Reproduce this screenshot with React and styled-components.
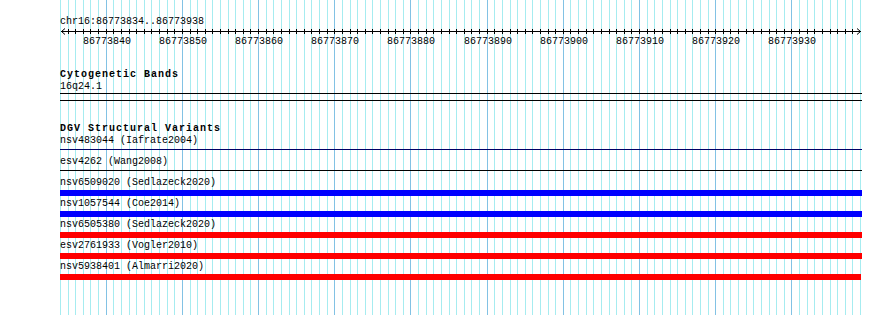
import React from 'react';
import styled, { createGlobalStyle } from 'styled-components';

const START = 86773834;
const END = 86773938;
const BASES = END - START + 1;
const VIEW_W = 800;
const PX = VIEW_W / BASES;

const GlobalStyle = createGlobalStyle`
    html, body {
        margin: 0;
        padding: 0;
        background: #fff;
    }
    body {
        font-family: "Liberation Mono", "DejaVu Sans Mono", monospace;
        font-size: 10px;
        color: #000;
    }
`;

const Page = styled.div`
    position: relative;
    width: 890px;
    height: 315px;
    overflow: hidden;
`;

const Grid = styled.svg`
    position: absolute;
    left: 60px;
    top: 0;
    width: 802px;
    height: 315px;
    pointer-events: none;
`;

const Content = styled.div`
    position: relative;
    padding: 15px 0 0 60px;
    width: 802px;
`;

// text sits 1px low in its 12px box, like the bitmap font of the original
const TextLine = styled.div`
    height: 12px;
    line-height: 14px;
    white-space: pre;
    font-size: 10px;
`;

const Heading = styled(TextLine)`
    margin-top: ${p => p.$top}px;
    font-weight: bold;
    letter-spacing: 1px;
`;

const Axis = styled.svg`
    display: block;
    width: 802px;
    height: 8px;
`;

const TickLabels = styled.div`
    position: relative;
    height: 12px;
`;

const TickLabel = styled.span`
    position: absolute;
    top: 0;
    line-height: 14px;
    transform: translateX(-50%);
`;

const Rule = styled.div`
    margin-top: ${p => p.$top}px;
    height: 1px;
    width: 802px;
    background: ${p => p.$color || '#000'};
`;

const Row = styled.div`
    height: 21px;
`;

const Bar = styled.div`
    margin-top: 2px;
    height: 6px;
    width: ${p => p.$w || 802}px;
    background: ${p => p.$color};
`;

const gridX = i => Math.round(i * PX) + 0.5;

const GridLines = () => (
    <Grid>
        {Array.from({ length: BASES + 1 }, (_, i) => {
            const major = (START + i) % 10 === 0;
            return (
                <line
                    key={i}
                    x1={gridX(i)}
                    x2={gridX(i)}
                    y1={0}
                    y2={315}
                    stroke={major ? '#82c2e4' : '#a6ecf0'}
                    strokeWidth={1}
                />
            );
        })}
    </Grid>
);

const Ruler = () => {
    const labels = [];
    for (let i = 0; i <= BASES; i++) {
        if ((START + i) % 10 === 0) labels.push(i);
    }
    return (
        <>
            <TextLine>chr16:{START}..{END}</TextLine>
            <Axis>
                <line x1={1} x2={801} y1={4.5} y2={4.5} stroke="#000" />
                {Array.from({ length: BASES - 1 }, (_, k) => k + 1).map(i => (
                    <line key={i} x1={gridX(i)} x2={gridX(i)} y1={2} y2={7} stroke="#000" />
                ))}
                <polyline points="5,1.5 1.5,4.5 5,7.5" fill="none" stroke="#000" />
                <polyline points="797,1.5 800.5,4.5 797,7.5" fill="none" stroke="#000" />
            </Axis>
            <TickLabels>
                {labels.map(i => (
                    <TickLabel key={i} style={{ left: Math.round(i * PX) + 1 }}>
                        {START + i}
                    </TickLabel>
                ))}
            </TickLabels>
        </>
    );
};

const variants = [
    { name: 'nsv483044 (Iafrate2004)', kind: 'line', color: '#000066' },
    { name: 'esv4262 (Wang2008)', kind: 'line', color: '#000' },
    { name: 'nsv6509020 (Sedlazeck2020)', kind: 'bar', color: '#0000ff' },
    { name: 'nsv1057544 (Coe2014)', kind: 'bar', color: '#0000ff' },
    { name: 'nsv6505380 (Sedlazeck2020)', kind: 'bar', color: '#ff0000' },
    { name: 'esv2761933 (Vogler2010)', kind: 'bar', color: '#ff0000' },
    { name: 'nsv5938401 (Almarri2020)', kind: 'bar', color: '#ff0000', w: 801 },
];

const App = () => (
    <Page>
        <GlobalStyle />
        <GridLines />
        <Content>
            <Ruler />

            <Heading $top={21}>Cytogenetic Bands</Heading>
            <TextLine>16q24.1</TextLine>
            <Rule $top={1} />
            <Rule $top={6} />

            <Heading $top={21}>DGV Structural Variants</Heading>
            {variants.map(v => (
                <Row key={v.name}>
                    <TextLine>{v.name}</TextLine>
                    {v.kind === 'bar' ? (
                        <Bar $color={v.color} $w={v.w} />
                    ) : (
                        <Rule $top={3} $color={v.color} />
                    )}
                </Row>
            ))}
        </Content>
    </Page>
);

export default App;
